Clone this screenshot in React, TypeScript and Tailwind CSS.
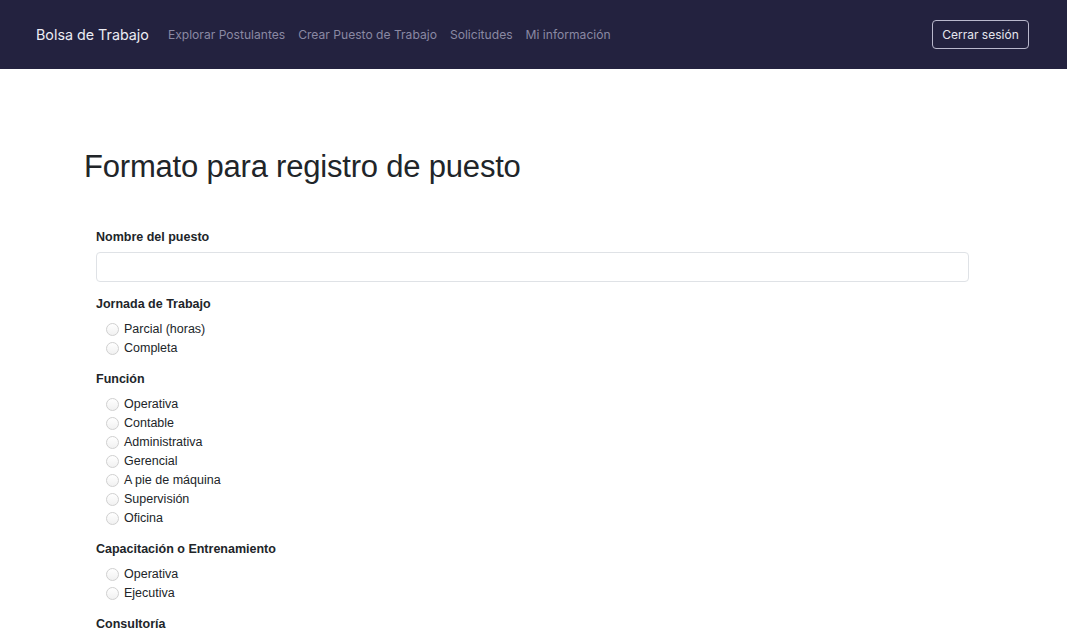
import React from 'react';

const sections = [
  { title: 'Jornada de Trabajo', options: ['Parcial (horas)', 'Completa'] },
  {
    title: 'Función',
    options: ['Operativa', 'Contable', 'Administrativa', 'Gerencial', 'A pie de máquina', 'Supervisión', 'Oficina'],
  },
  { title: 'Capacitación o Entrenamiento', options: ['Operativa', 'Ejecutiva'] },
  { title: 'Consultoría', options: ['Operativa', 'Ejecutiva'] },
];

const Radio = ({ label }: { label: string }) => (
  <label className="flex items-center h-[19px] pl-[10px] text-[12.5px] text-[#212529]">
    <span className="w-[13px] h-[13px] rounded-full border border-[#d0d0d0] bg-gradient-to-b from-white to-[#f1f1f1] mr-[5px] shrink-0" />
    {label}
  </label>
);

const App = () => {
  return (
    <div className="min-h-screen bg-white font-['Liberation_Sans',Arial,sans-serif]">
      {/* Navbar */}
      <nav className="h-[69px] bg-[#23223f] flex items-center px-[36px] font-['Inter',sans-serif]">
        <span className="text-[14.3px] text-[#ececf3] mr-[19px] pt-[1px]">Bolsa de Trabajo</span>
        <div className="flex items-center gap-[13px] text-[12.1px] text-[#8a89a3] pt-[1px]">
          <a>Explorar Postulantes</a>
          <a>Crear Puesto de Trabajo</a>
          <a>Solicitudes</a>
          <a>Mi información</a>
        </div>
        <button className="ml-auto mr-[2px] h-[29px] w-[97px] rounded-[4px] border border-[#b9b8cc] text-[12px] text-[#e6e6ee]">
          Cerrar sesión
        </button>
      </nav>

      <main className="pl-[84px] pr-[98px] pt-[79px]">
        <h1 className="text-[31px] leading-[38px] text-[#212529] tracking-[-0.2px]">
          Formato para registro de puesto
        </h1>

        <form className="pl-[12px] pt-[43px]">
          <label className="block text-[12.5px] font-bold text-[#212529] leading-[16px]">Nombre del puesto</label>
          <input className="mt-[7px] block w-full h-[30px] rounded-[4px] border border-[#dfe2e6]" />

          {sections.map((s, i) => (
            <div key={i} className={i === 0 ? 'mt-[14px]' : 'mt-[13px]'}>
              <div className="text-[12.5px] font-bold text-[#212529] leading-[16px] mb-[8px]">{s.title}</div>
              {s.options.map((o) => (
                <Radio key={o} label={o} />
              ))}
            </div>
          ))}
        </form>
      </main>
    </div>
  );
};

export default App;
